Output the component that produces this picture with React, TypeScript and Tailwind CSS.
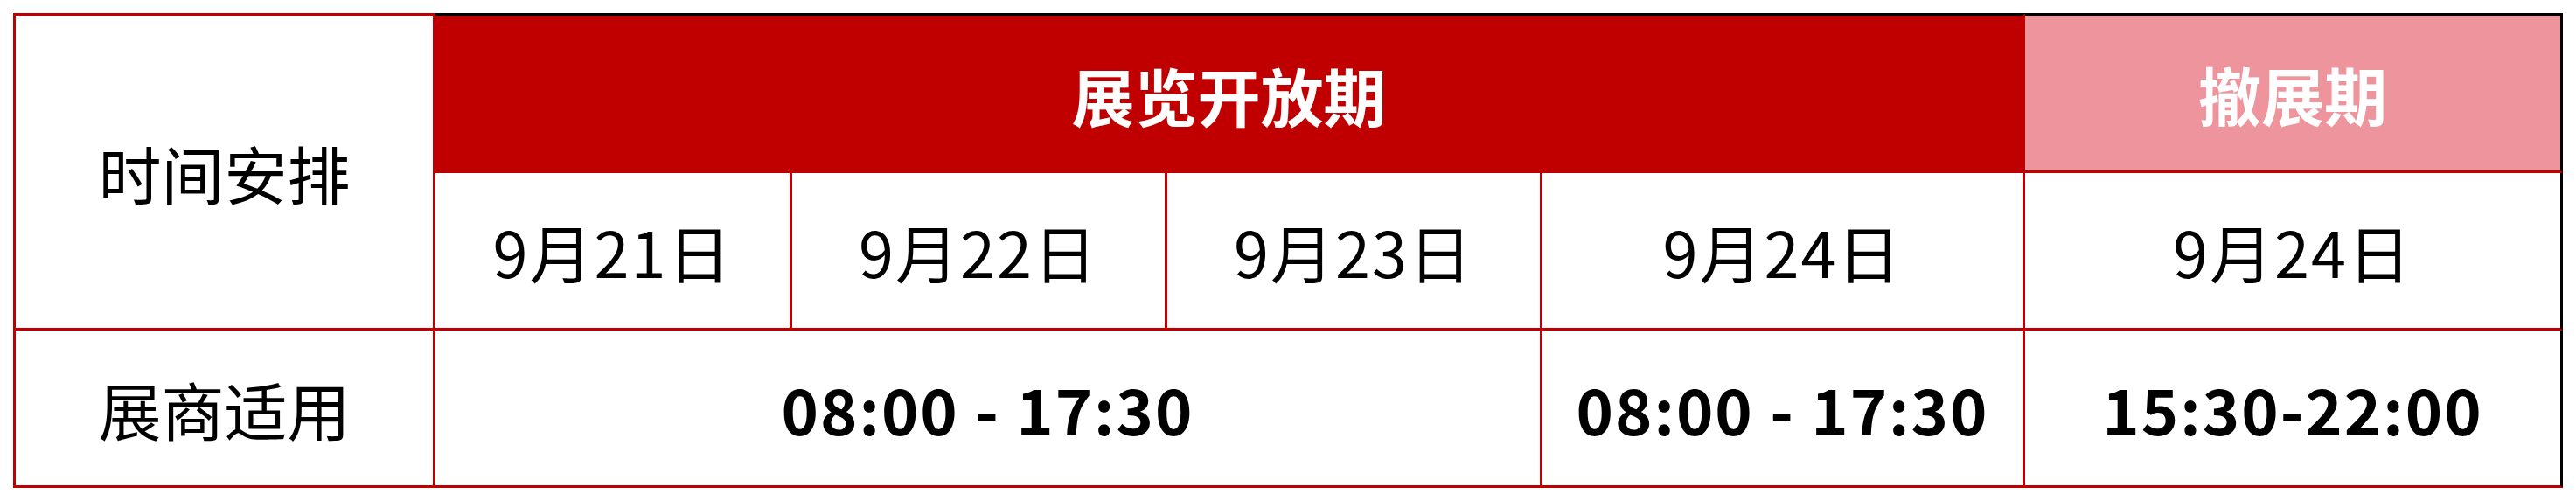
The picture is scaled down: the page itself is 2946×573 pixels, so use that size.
const FONT = "font-['Microsoft_YaHei','Noto_Sans_CJK_SC',sans-serif]";

const DATES = ["9月21日", "9月22日", "9月23日", "9月24日"];

export default function App() {
  return (
    <div className="min-h-[573px] w-[2946px] bg-white p-[15px]">
      <div
        className={`grid grid-cols-[480px_408px_429px_429px_552px_615px] grid-rows-[183px_180px_180px] border-l-[3px] border-[#c00000] text-black ${FONT}`}
      >
        {/* 时间安排 spans the header and date rows */}
        <div className="row-span-2 flex items-center justify-center border-t-[3px] border-r-[3px] border-b-[3px] border-[#c00000] text-[72px]">
          时间安排
        </div>
        <div className="col-span-4 flex items-center justify-center border-t-[3px] border-t-black border-r-[3px] border-r-[#c00000] bg-[#c00000] text-[72px] font-bold text-white">
          展览开放期
        </div>
        <div className="flex items-center justify-center border-t-[3px] border-t-black border-r-[3px] border-r-black border-b-[3px] border-b-[#c00000] bg-[#ee949c] text-[72px] font-bold text-white">
          撤展期
        </div>

        {/* dates */}
        {DATES.map((d) => (
          <div
            key={d}
            className="flex items-center justify-center border-r-[3px] border-b-[3px] border-[#c00000] text-[72px] tracking-[2px]"
          >
            {d}
          </div>
        ))}
        <div className="flex items-center justify-center border-r-[3px] border-r-black border-b-[3px] border-b-[#c00000] text-[72px] tracking-[2px]">
          9月24日
        </div>

        {/* hours */}
        <div className="flex items-center justify-center border-r-[3px] border-b-[3px] border-[#c00000] text-[72px]">
          展商适用
        </div>
        <div className="col-span-3 flex items-center justify-center border-r-[3px] border-b-[3px] border-[#c00000] text-[72px] font-bold tracking-[2px]">
          08:00 - 17:30
        </div>
        <div className="flex items-center justify-center border-r-[3px] border-b-[3px] border-[#c00000] text-[72px] font-bold tracking-[2px]">
          08:00 - 17:30
        </div>
        <div className="flex items-center justify-center border-r-[3px] border-r-black border-b-[3px] border-b-[#c00000] text-[72px] font-bold tracking-[2px]">
          15:30-22:00
        </div>
      </div>
    </div>
  );
}
